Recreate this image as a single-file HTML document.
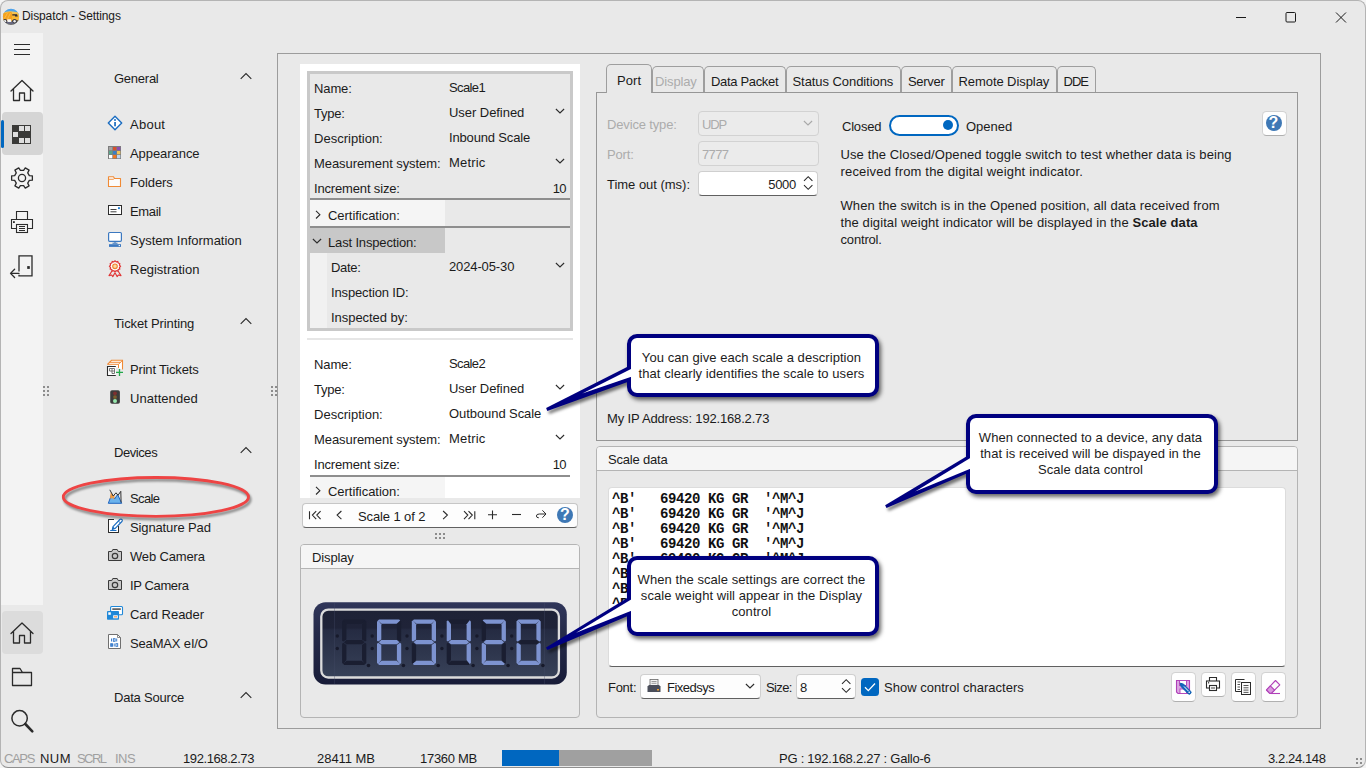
<!DOCTYPE html>
<html lang="en">
<head>
<meta charset="utf-8">
<title>Dispatch - Settings</title>
<style>
html,body{margin:0;padding:0}
body{width:1366px;height:768px;overflow:hidden;background:#f4f4f4;font-family:"Liberation Sans",sans-serif;font-size:13px;color:#1b1b1b;position:relative}
.a{position:absolute;box-sizing:border-box}
.t{position:absolute;white-space:nowrap;line-height:16px;height:16px;margin-top:1px}
.dis{color:#a3a3a3}
svg{position:absolute;overflow:visible}
.grp{position:absolute;box-sizing:border-box;border:1px solid #b4b4b4;border-radius:4px;background:#e9e9e9}
.grph{position:absolute;box-sizing:border-box;left:0;top:0;right:0;height:24px;background:#f5f5f5;border-bottom:1px solid #b4b4b4;border-radius:3px 3px 0 0}
.tab{position:absolute;box-sizing:border-box;top:65px;height:28px;border:1px solid #9e9e9e;border-bottom:none;border-radius:5px 5px 0 0;background:#e9e9e9}
.btn{position:absolute;box-sizing:border-box;width:25px;height:25px;background:#fefefe;border:1px solid #d2d2d2;border-bottom-color:#b0b0b0;border-radius:4.500px}
.inp{position:absolute;box-sizing:border-box;background:#fff;border:1px solid #cfcfcf;border-bottom-color:#606060;border-radius:4px}
.inpd{position:absolute;box-sizing:border-box;background:#ebebeb;border:1px solid #d2d2d2;border-radius:4px}
.call{position:absolute;box-sizing:border-box;background:#fff;border:4px solid #000080;border-radius:10px;box-shadow:2px 3px 4px rgba(0,0,0,.6);text-align:center;font-size:13px;line-height:16px;color:#1c1c1c;padding-right:3px;letter-spacing:0.06px}
</style>
</head>
<body>
<!-- window chrome -->
<div class="a" id="win" style="left:0;top:0;width:1366px;height:768px;background:#e9e9e9;border:1px solid #b4b4b4;border-bottom-color:#8f8f8f;border-radius:8px"></div>

<!-- TITLEBAR -->
<div id="titlebar">
<svg style="left:2px;top:8px" width="18" height="18" viewBox="2 8 18 18">
<defs><clipPath id="tc"><circle cx="11" cy="16.800" r="8.100"/></clipPath></defs>
<g clip-path="url(#tc)">
<rect x="2" y="8" width="18" height="18" fill="#4fa3ea"/>
<path d="M2 13 Q8 10.500 13 11.500 T20 12 V26 H2 Z" fill="#f2c45a"/>
<rect x="2" y="21.300" width="18" height="5" fill="#686a80"/>
<path d="M3 20.800 V13.200 L11.300 11.800 L12 13.500 V20.800 Z" fill="#f5a21e"/>
<path d="M4.500 18.500 L7.500 13 M7.500 19 L10.500 13" stroke="#f9bd4c" stroke-width="0.900"/>
<path d="M12 13.800 H17.300 L19.200 16.500 V20.800 H12 Z" fill="#f7b733"/>
<path d="M12.300 14.300 H17 L17.800 16.400 H15 V15.600 H12.300 Z" fill="#2d2a33"/>
<rect x="7.300" y="19.300" width="3.800" height="2.700" fill="#f4f4f4"/>
<rect x="19" y="17.800" width="1" height="2" fill="#ff4f8a"/>
<rect x="12" y="20.300" width="7.500" height="1.200" fill="#3a3a44"/>
<circle cx="5" cy="21.200" r="2.200" fill="#3a3a44"/><circle cx="5" cy="21.200" r="1.200" fill="#f0f0f0"/>
<circle cx="14.600" cy="21.200" r="2.200" fill="#3a3a44"/><circle cx="14.600" cy="21.200" r="1.200" fill="#f0f0f0"/>
</g>
</svg>
<div class="t" style="left:22px;top:7px;font-size:12px;color:#1a1a1a;letter-spacing:-0.101px">Dispatch - Settings</div>
<svg style="left:1231px;top:7px" width="120" height="20" viewBox="0 0 120 20" fill="none" stroke="#1a1a1a" stroke-width="1">
<path d="M5 10.5 H15"/>
<rect x="55" y="5.5" width="9.5" height="9.5" rx="1"/>
<path d="M105 5.5 L115 15.5 M115 5.5 L105 15.5"/>
</svg>
</div>
<!-- NAVSTRIP -->
<div id="navstrip">
<div class="a" style="left:1px;top:33px;width:42px;height:572px;background:#f3f3f3"></div>
<div class="a" style="left:2px;top:112px;width:41px;height:43px;background:#d5d5d5;border-radius:4px"></div>
<div class="a" style="left:1px;top:120px;width:3px;height:28px;background:#0067c0;border-radius:2px"></div>
<div class="a" style="left:2px;top:611px;width:41px;height:43px;background:#dcdcdc;border-radius:4px"></div>
<svg style="left:2px;top:33px" width="41" height="715" viewBox="2 33 41 715" fill="none" stroke="#2b2b2b" stroke-width="1.3" stroke-linejoin="round" stroke-linecap="round">
<!-- hamburger -->
<path d="M14 44.5 H30 M14 49.5 H30 M14 54.5 H30" stroke-width="1" stroke-linecap="butt"/>
<!-- home -->
<path id="home" d="M11 91 L22 80.5 L33 91 M13.5 89 V100.5 H19.5 V93 H24.5 V100.5 H30.5 V89"/>
<!-- checker -->
<rect x="12" y="125" width="19" height="19" fill="#3a3a38" stroke="none"/>
<g fill="#dedede" stroke="none"><rect x="19" y="126" width="5" height="5"/><rect x="25" y="126" width="5" height="5"/><rect x="13" y="132" width="5" height="5"/><rect x="19" y="138" width="5" height="5"/><rect x="25" y="138" width="5" height="5"/></g>
<!-- gear -->
<g id="gear"><path d="M29.32 175.62 L32.37 175.80 L32.37 180.20 L29.32 180.38 L27.72 183.15 L29.09 185.88 L25.28 188.08 L23.60 185.53 L20.40 185.53 L18.72 188.08 L14.91 185.88 L16.28 183.15 L14.68 180.38 L11.63 180.20 L11.63 175.80 L14.68 175.62 L16.28 172.85 L14.91 170.12 L18.72 167.92 L20.40 170.47 L23.60 170.47 L25.28 167.92 L29.09 170.12 L27.72 172.85 Z" stroke-width="1.3"/><circle cx="22" cy="178" r="3.6" stroke-width="1.3"/></g>
<!-- printer -->
<g id="printer" stroke-width="1.1" stroke-linejoin="miter"><path d="M16.5 219.500 V211.500 H27.500 V219.500"/><path d="M16.500 228.500 H11.500 V219.500 H32.500 V228.500 H27.500"/><rect x="16.500" y="224.500" width="11" height="8"/><path d="M19 226.500 H25 M19 228.500 H25 M19 230.500 H25" stroke-width="1" stroke-linecap="butt" shape-rendering="crispEdges"/><rect x="13" y="221.200" width="1.800" height="1.800" fill="#2b2b2b" stroke="none"/></g>
<!-- exit -->
<g id="exit" stroke-width="1.3" stroke-linejoin="miter" stroke-linecap="butt"><path d="M19 271.600 V255.800 H32 V275.800 H19 V274.800"/><path d="M19 273.400 H10.800 M14.600 269.300 L10.500 273.400 L14.600 277.500" stroke-linecap="round" stroke-linejoin="round"/><rect x="27.200" y="266.100" width="2.600" height="2.800" fill="#2b2b2b" stroke="none"/></g>
<!-- home2 -->
<path transform="translate(0 542.5)" d="M11 91 L22 80.5 L33 91 M13.5 89 V100.5 H19.5 V93 H24.5 V100.5 H30.5 V89"/>
<!-- folder -->
<path d="M12.500 685.500 V668.500 H20 L22.500 672.500 H31.500 V685.500 Z M12.500 672.500 H22.500"/>
<!-- search -->
<circle cx="19.600" cy="718.300" r="7.700" stroke-width="1.500"/><path d="M25.300 724 L32.300 731.300" stroke-width="2.600"/>
</svg>
</div>
<!-- SIDEBAR -->
<div id="sidebar">
<div class="t" style="left:114px;top:70px;letter-spacing:-0.25px">General</div>
<svg style="left:240px;top:72px" width="12" height="8" viewBox="0 0 12 8" fill="none" stroke="#2b2b2b" stroke-width="1.1"><path d="M0.7 6.800 L6 1.500 L11.300 6.800"/></svg>
<div class="t" style="left:114px;top:315px;letter-spacing:-0.109px">Ticket Printing</div>
<svg style="left:240px;top:317px" width="12" height="8" viewBox="0 0 12 8" fill="none" stroke="#2b2b2b" stroke-width="1.1"><path d="M0.7 6.800 L6 1.500 L11.300 6.800"/></svg>
<div class="t" style="left:114px;top:444px;letter-spacing:-0.427px">Devices</div>
<svg style="left:240px;top:446px" width="12" height="8" viewBox="0 0 12 8" fill="none" stroke="#2b2b2b" stroke-width="1.1"><path d="M0.7 6.800 L6 1.500 L11.300 6.800"/></svg>
<div class="t" style="left:114px;top:689px;letter-spacing:-0.206px">Data Source</div>
<svg style="left:240px;top:691px" width="12" height="8" viewBox="0 0 12 8" fill="none" stroke="#2b2b2b" stroke-width="1.1"><path d="M0.7 6.800 L6 1.500 L11.300 6.800"/></svg>
<div class="t" style="left:130px;top:116px;letter-spacing:0.253px">About</div>
<div class="t" style="left:130px;top:145px;letter-spacing:-0.062px">Appearance</div>
<div class="t" style="left:130px;top:174px;letter-spacing:-0.087px">Folders</div>
<div class="t" style="left:130px;top:203px;letter-spacing:-0.353px">Email</div>
<div class="t" style="left:130px;top:232px;letter-spacing:-0.013px">System Information</div>
<div class="t" style="left:130px;top:261px;letter-spacing:0.01px">Registration</div>
<div class="t" style="left:130px;top:361px;letter-spacing:-0.177px">Print Tickets</div>
<div class="t" style="left:130px;top:390px;letter-spacing:0.052px">Unattended</div>
<div class="t" style="left:130px;top:490px;letter-spacing:-0.606px">Scale</div>
<div class="t" style="left:130px;top:519px;letter-spacing:-0.127px">Signature Pad</div>
<div class="t" style="left:130px;top:548px;letter-spacing:-0.161px">Web Camera</div>
<div class="t" style="left:130px;top:577px;letter-spacing:-0.378px">IP Camera</div>
<div class="t" style="left:130px;top:606px;letter-spacing:-0.04px">Card Reader</div>
<div class="t" style="left:130px;top:635px;letter-spacing:-0.158px">SeaMAX eI/O</div>
<svg style="left:100px;top:110px" width="30" height="550" viewBox="100 110 30 550" fill="none">
<g><path d="M115 116.300 L121.700 123 L115 129.700 L108.300 123 Z" fill="#fff" stroke="#1a6cc0" stroke-width="1.400" stroke-linejoin="round"/><rect x="114.200" y="122" width="1.700" height="4.300" fill="#1a6cc0"/><circle cx="115" cy="120.100" r="1" fill="#1a6cc0"/></g>
<g><rect x="108" y="146" width="13" height="13" fill="#7d7d7d"/><rect x="109" y="147" width="3.300" height="3.300" fill="#a5a5a5"/><rect x="113" y="147" width="3.300" height="3.300" fill="#d9502f"/><rect x="117" y="147" width="3.300" height="3.300" fill="#8b4fb0"/><rect x="109" y="151" width="3.300" height="3.300" fill="#5aa58a"/><rect x="113" y="151" width="3.300" height="3.300" fill="#3b7fc4"/><rect x="117" y="151" width="3.300" height="3.300" fill="#f0c458"/><rect x="109" y="155" width="3.300" height="3.300" fill="#ffffff"/><rect x="113" y="155" width="3.300" height="3.300" fill="#f07820"/><rect x="117" y="155" width="3.300" height="3.300" fill="#b8d4f0"/></g>
<path d="M108.500 186.500 V176.700 H113.500 L114.500 178.500 H120.500 V186.500 Z" fill="#fbfbfb" stroke="#f08a35" stroke-width="1.100" stroke-linejoin="round"/><path d="M108.500 179.300 H113.300 L114.500 178.500" stroke="#f08a35" stroke-width="0.900"/>
<g><rect x="108.500" y="205.500" width="13" height="9" fill="#fff" stroke="#2b2b2b" stroke-width="1"/><path d="M110.500 209.500 H116.500 M110.500 211.800 H116.500" stroke="#2b2b2b" stroke-width="0.900"/><rect x="118" y="207.200" width="1.900" height="1.900" fill="#1a7ad0"/></g>
<g><rect x="108.600" y="232.500" width="12.800" height="8.800" rx="1" fill="#fff" stroke="#3b78c0" stroke-width="1.200"/><path d="M115 241.500 V243 M112.500 243.300 H117.500" stroke="#3b78c0" stroke-width="1.100"/><rect x="109" y="244.200" width="12" height="2.700" fill="#3b78c0"/><rect x="118.700" y="245" width="1.200" height="1.100" fill="#fff"/></g>
<g><path d="M112.300 270.500 L109 275.600 L111.700 275 L112.800 276.600 L115 272.800 L117.200 276.600 L118.300 275 L121 275.600 L117.700 270.500" fill="none" stroke="#e03535" stroke-width="1.100" stroke-linejoin="round"/><path d="M120.50 266.30 L119.44 267.49 L119.76 269.05 L118.25 269.55 L117.75 271.06 L116.19 270.74 L115.00 271.80 L113.81 270.74 L112.25 271.06 L111.75 269.55 L110.24 269.05 L110.56 267.49 L109.50 266.30 L110.56 265.11 L110.24 263.55 L111.75 263.05 L112.25 261.54 L113.81 261.86 L115.00 260.80 L116.19 261.86 L117.75 261.54 L118.25 263.05 L119.76 263.55 L119.44 265.11 Z" fill="#fff" stroke="#e03535" stroke-width="1.200"/><circle cx="115" cy="266.300" r="2.300" fill="#fbd9a0" stroke="#f08030" stroke-width="1.100"/></g>
<g><path d="M107.500 364.300 L111.500 360.300 H122.500 V369.500" stroke="#f08a35" stroke-width="1.100" fill="#fff"/><path d="M109.500 362.300 H120.500 M107.500 364.300 H118.500 L122.500 360.300 M118.500 364.300 V368" stroke="#f08a35" stroke-width="1"/><path d="M115.800 366.500 H107.500 V375.500 H115.800" fill="#fff" stroke="#2b2b2b" stroke-width="1.100"/><path d="M109.500 368.500 H114.500 V373.500 H112 V371 H109.500 Z M112 368.500 V371 H114.500" stroke="#6a6a6a" stroke-width="0.900"/><path d="M116 372.400 H123 M119.500 369 V376" stroke="#22a84a" stroke-width="1.300"/></g>
<g><rect x="110.200" y="390.200" width="9.700" height="13.600" rx="1.800" fill="#3b3b3b"/><circle cx="115" cy="393.300" r="1.900" fill="#7d3030"/><circle cx="115" cy="397.100" r="1.900" fill="#7a5c2c"/><circle cx="115" cy="400.900" r="2" fill="#96e6ac"/></g>
<g><path d="M108.300 503.300 L111.800 494 L114.600 499 L117.600 494.500 L121.700 503.300 Z" fill="#6ab2ec" stroke="#1f64c0" stroke-width="1" stroke-linejoin="round"/><path d="M109.800 499.300 L110.800 492 L113.200 496.300 L114.800 494.300 L114 499.800 L112.600 497.300 L111.600 499.300 L110.900 497.600 Z" fill="#f59a3c"/><path d="M109.800 489.800 L113.200 496 L116 492.800 L118 495.300 L120.800 491.300 L121.100 502.500" stroke="#333" stroke-width="1" stroke-linejoin="round" fill="none"/></g>
<g><path d="M114 519.500 H108.500 V532.500 H118.500 V526" fill="#fff" stroke="#2b2b2b" stroke-width="1"/><rect x="108.900" y="519.900" width="9.200" height="12.200" fill="#fff"/><path d="M114 519.500 H108.500 V532.500 H118.500 V526.500" stroke="#2b2b2b" stroke-width="1"/><path d="M110.200 530.500 H116.500" stroke="#1a6cc0" stroke-width="1"/><path d="M112.300 529.600 L113 526.600 L119.900 519.500 A1.400 1.400 0 0 1 121.900 521.500 L115 528.600 Z" fill="#fff" stroke="#1a6cc0" stroke-width="1.100" stroke-linejoin="round"/><path d="M112.300 529.600 L113 526.600 L115 528.600 Z" fill="#1a6cc0"/><path d="M118.400 521 L120.400 523" stroke="#1a6cc0" stroke-width="0.900"/></g>
<g transform="translate(0 0)"><path d="M108.500 560.500 V551.500 H111.800 L112.800 549.500 H117.200 L118.200 551.500 H121.500 V560.500 Z" fill="#c9c9c9" stroke="#3a3a3a" stroke-width="1" stroke-linejoin="round"/><circle cx="115" cy="556" r="2.700" fill="#c9c9c9" stroke="#3a3a3a" stroke-width="1.200"/></g>
<g transform="translate(0 29)"><path d="M108.500 560.500 V551.500 H111.800 L112.800 549.500 H117.200 L118.200 551.500 H121.500 V560.500 Z" fill="#c9c9c9" stroke="#3a3a3a" stroke-width="1" stroke-linejoin="round"/><circle cx="115" cy="556" r="2.700" fill="#c9c9c9" stroke="#3a3a3a" stroke-width="1.200"/></g>
<g><rect x="110.600" y="606.500" width="11.900" height="8.200" rx="1" fill="#fff" stroke="#2088d8" stroke-width="1.100"/><rect x="112.300" y="608.300" width="8.500" height="1.600" fill="#555"/><rect x="107" y="611" width="12" height="8.700" rx="0.800" fill="#2088d8"/><rect x="108.300" y="612.300" width="2.500" height="2.500" fill="#fff"/><rect x="113.200" y="615.300" width="4.600" height="3" fill="#fff"/><rect x="114" y="616.300" width="3" height="1.100" fill="#f08a35"/></g>
<g><path d="M108.500 634.500 H117.500 L120.500 637.500 V648.500 H108.500 Z" fill="#fff" stroke="#707070" stroke-width="1" stroke-linejoin="round"/><path d="M117.500 634.500 V637.500 H120.500" stroke="#707070" stroke-width="0.800"/><g stroke="#2a72c8" stroke-width="0.900"><path d="M111.500 638.500 V641.500 M116.700 638.500 V641.500 M114.200 643.500 V646.500"/><rect x="113.300" y="638.700" width="1.800" height="2.600"/><rect x="110.700" y="643.700" width="1.800" height="2.600"/><rect x="115.900" y="643.700" width="1.800" height="2.600"/></g></g>
</svg>
<svg style="left:50px;top:465px" width="215" height="65" viewBox="50 465 215 65" fill="none"><defs><filter id="sh" x="-10%" y="-20%" width="120%" height="150%"><feGaussianBlur stdDeviation="1.3"/></filter></defs><ellipse cx="157.500" cy="499.500" rx="92.600" ry="19.400" stroke="rgba(0,0,0,.4)" stroke-width="3" filter="url(#sh)"/><ellipse cx="155.900" cy="496.900" rx="92.600" ry="19.400" stroke="#ee4444" stroke-width="2.800"/></svg>
<svg style="left:43px;top:386px" width="6" height="10" viewBox="0 0 6 10" fill="#8c8c8c"><rect x="0" y="0" width="2" height="2"/><rect x="4" y="0" width="2" height="2"/><rect x="0" y="4" width="2" height="2"/><rect x="4" y="4" width="2" height="2"/><rect x="0" y="8" width="2" height="2"/><rect x="4" y="8" width="2" height="2"/></svg>
<svg style="left:271px;top:386px" width="6" height="10" viewBox="0 0 6 10" fill="#8c8c8c"><rect x="0" y="0" width="2" height="2"/><rect x="4" y="0" width="2" height="2"/><rect x="0" y="4" width="2" height="2"/><rect x="4" y="4" width="2" height="2"/><rect x="0" y="8" width="2" height="2"/><rect x="4" y="8" width="2" height="2"/></svg>
</div>
<!-- CONTENT -->
<div id="content">
<div class="a" style="left:277px;top:53px;width:1044px;height:676px;border:1px solid #9c9c9c"></div>
<div class="a" style="left:300px;top:64px;width:280px;height:434px;background:#fff"></div>
<div class="a" style="left:307px;top:71px;width:266px;height:260px;background:#e9e9e9;border:3px solid #c9c9c9"></div>
<div class="a" style="left:310px;top:198px;width:260px;height:2px;background:#8e8e8e"></div>
<div class="a" style="left:310px;top:200px;width:135px;height:26px;background:#f5f5f5"></div>
<div class="a" style="left:310px;top:226px;width:260px;height:2px;background:#8e8e8e"></div>
<div class="a" style="left:310px;top:228px;width:135px;height:25px;background:#c8c8c8"></div>
<div class="a" style="left:310px;top:253px;width:17px;height:75px;background:#f1f1f1"></div>
<div class="a" style="left:307px;top:337.500px;width:266px;height:2px;background:#e6e6e6"></div>
<div class="a" style="left:310px;top:475px;width:260px;height:2px;background:#8e8e8e"></div>
<div class="a" style="left:310px;top:477px;width:135px;height:21px;background:#f5f5f5"></div>
<div class="t" style="left:314px;top:80px;letter-spacing:-0.109px">Name:</div>
<div class="t" style="left:449px;top:79px;letter-spacing:-0.625px">Scale1</div>
<div class="t" style="left:314px;top:105px;letter-spacing:-0.209px">Type:</div>
<div class="t" style="left:449px;top:104px;letter-spacing:-0.052px">User Defined</div>
<svg style="left:555px;top:108px" width="10" height="6" viewBox="0 0 10 6" fill="none" stroke="#2b2b2b" stroke-width="1.1"><path d="M0.9 1 L5 5 L9.100 1"/></svg>
<div class="t" style="left:314px;top:130px;letter-spacing:0.009px">Description:</div>
<div class="t" style="left:449px;top:129px;letter-spacing:-0.163px">Inbound Scale</div>
<div class="t" style="left:314px;top:155px;letter-spacing:-0.072px">Measurement system:</div>
<div class="t" style="left:449px;top:154px;letter-spacing:0.185px">Metric</div>
<svg style="left:555px;top:158px" width="10" height="6" viewBox="0 0 10 6" fill="none" stroke="#2b2b2b" stroke-width="1.1"><path d="M0.9 1 L5 5 L9.100 1"/></svg>
<div class="t" style="left:314px;top:180px;letter-spacing:-0.16px">Increment size:</div>
<div class="t" style="left:500px;width:66px;text-align:right;top:180px;letter-spacing:-0.609px">10</div>
<div class="t" style="left:314px;top:356px;letter-spacing:-0.109px">Name:</div>
<div class="t" style="left:449px;top:355px;letter-spacing:-0.625px">Scale2</div>
<div class="t" style="left:314px;top:381px;letter-spacing:-0.209px">Type:</div>
<div class="t" style="left:449px;top:380px;letter-spacing:-0.052px">User Defined</div>
<svg style="left:555px;top:384px" width="10" height="6" viewBox="0 0 10 6" fill="none" stroke="#2b2b2b" stroke-width="1.1"><path d="M0.9 1 L5 5 L9.100 1"/></svg>
<div class="t" style="left:314px;top:406px;letter-spacing:0.009px">Description:</div>
<div class="t" style="left:449px;top:405px;letter-spacing:-0.07px">Outbound Scale</div>
<div class="t" style="left:314px;top:431px;letter-spacing:-0.072px">Measurement system:</div>
<div class="t" style="left:449px;top:430px;letter-spacing:0.185px">Metric</div>
<svg style="left:555px;top:434px" width="10" height="6" viewBox="0 0 10 6" fill="none" stroke="#2b2b2b" stroke-width="1.1"><path d="M0.9 1 L5 5 L9.100 1"/></svg>
<div class="t" style="left:314px;top:456px;letter-spacing:-0.16px">Increment size:</div>
<div class="t" style="left:500px;width:66px;text-align:right;top:456px;letter-spacing:-0.609px">10</div>
<svg style="left:315px;top:210px" width="6" height="10" viewBox="0 0 6 10" fill="none" stroke="#2b2b2b" stroke-width="1.1"><path d="M1 0.9 L4.900 4.700 L1 8.500"/></svg>
<div class="t" style="left:328px;top:207px;letter-spacing:-0.036px">Certification:</div>
<svg style="left:312px;top:238px" width="10" height="6" viewBox="0 0 10 6" fill="none" stroke="#2b2b2b" stroke-width="1.1"><path d="M0.9 1 L5 5 L9.100 1"/></svg>
<div class="t" style="left:328px;top:234px;letter-spacing:-0.16px">Last Inspection:</div>
<div class="t" style="left:331px;top:259px;letter-spacing:-0.316px">Date:</div>
<div class="t" style="left:449px;top:258px;letter-spacing:-0.125px">2024-05-30</div>
<svg style="left:555px;top:262px" width="10" height="6" viewBox="0 0 10 6" fill="none" stroke="#2b2b2b" stroke-width="1.1"><path d="M0.9 1 L5 5 L9.100 1"/></svg>
<div class="t" style="left:331px;top:284px;letter-spacing:-0.143px">Inspection ID:</div>
<div class="t" style="left:331px;top:309px;letter-spacing:-0.044px">Inspected by:</div>
<svg style="left:315px;top:486px" width="6" height="10" viewBox="0 0 6 10" fill="none" stroke="#2b2b2b" stroke-width="1.1"><path d="M1 0.9 L4.900 4.700 L1 8.500"/></svg>
<div class="a" style="left:328px;top:483px;width:110px;height:15px;overflow:hidden"><div class="t" style="left:0;top:0;letter-spacing:-0.036px">Certification:</div></div>
<div class="a" style="left:302px;top:503px;width:276px;height:25px;background:#fdfdfd;border:1px solid #c6c6c6;border-bottom-color:#606060;border-radius:4px"></div>
<svg style="left:302px;top:503px" width="276" height="25" viewBox="302 503 276 25" fill="none" stroke="#2b2b2b" stroke-width="1.1">
<path d="M309.500 511.200 V519.200 M316.200 511.100 L312.400 515.100 L316.200 519.100 M320.600 511.100 L316.800 515.100 L320.600 519.100"/>
<path d="M341.400 511 L337.100 515.100 L341.400 519.200"/>
<path d="M443.100 511 L447.400 515.100 L443.100 519.200"/>
<path d="M464 511.100 L467.800 515.100 L464 519.100 M468.500 511.100 L472.300 515.100 L468.500 519.100 M474.800 511.200 V519.200"/>
<path d="M488 514.800 H497 M492.500 510.400 V519.200"/>
<path d="M512 514.500 H521"/>
<path d="M545.500 514 H539.300 Q536.400 514 536.400 516 Q536.400 517.800 538.800 517.800 M542.400 510.300 L546 514 L542.400 517.700" stroke-width="1"/>
<circle cx="565" cy="515" r="8" fill="#3e78b5" stroke="none"/>
</svg>
<div class="t" style="left:358px;top:507.70000000000005px;letter-spacing:-0.117px">Scale 1 of 2</div>
<div class="t" style="left:559.500px;top:506px;width:11px;text-align:center;color:#fff;font-weight:bold;font-size:16px">?</div>
<svg style="left:435px;top:533px" width="10" height="6" viewBox="0 0 10 6" fill="#8c8c8c"><rect x="0" y="0" width="2" height="2"/><rect x="4" y="0" width="2" height="2"/><rect x="8" y="0" width="2" height="2"/><rect x="0" y="4" width="2" height="2"/><rect x="4" y="4" width="2" height="2"/><rect x="8" y="4" width="2" height="2"/></svg>
<div class="grp" style="left:300px;top:544px;width:280px;height:174px"><div class="grph" style="height:24px"></div></div>
<div class="t" style="left:312px;top:549px;letter-spacing:-0.125px">Display</div>
<svg id="lcd" style="left:313px;top:602px" width="254" height="83" viewBox="313 602 254 83">
<defs><linearGradient id="lg1" x1="0" y1="0" x2="0" y2="1"><stop offset="0" stop-color="#30365a"/><stop offset="0.35" stop-color="#262b4a"/><stop offset="1" stop-color="#181c38"/></linearGradient>
<linearGradient id="lg2" x1="0" y1="0" x2="0" y2="1"><stop offset="0" stop-color="#1e2236"/><stop offset="0.27" stop-color="#1f2338"/><stop offset="0.3" stop-color="#252b42"/><stop offset="1" stop-color="#384259"/></linearGradient></defs>
<rect x="313.500" y="602.200" width="253.300" height="82.300" rx="12" fill="url(#lg1)"/>
<rect x="321.300" y="609.600" width="237.600" height="67.900" rx="7" fill="url(#lg2)" stroke="#dcdcdc" stroke-width="2.300"/>
<path d="M334.500 603 V684 M544.500 603 V684" stroke="#454b68" stroke-width="0.600" opacity="0.55"/>
<g fill="#1a1e31"><polygon points="344.2,619.4 364.2,619.4 365.4,620.6 361.7,623.7 346.7,623.7 343.1,620.6"/><polygon points="366.3,621.5 365.1,620.3 362.0,624.3 362.0,639.4 365.1,641.5 366.3,640.7"/><polygon points="366.3,662.9 365.1,664.1 362.0,660.1 362.0,645.0 365.1,642.8 366.3,643.7"/><polygon points="344.2,665.0 364.2,665.0 365.4,663.8 361.7,660.7 346.7,660.7 343.1,663.8"/><polygon points="342.1,662.9 343.3,664.1 346.4,660.1 346.4,645.0 343.3,642.8 342.1,643.7"/><polygon points="342.1,621.5 343.3,620.3 346.4,624.3 346.4,639.4 343.3,641.5 342.1,640.7"/><polygon points="343.9,642.2 346.4,640.0 362.0,640.0 364.5,642.2 362.0,644.3 346.4,644.3"/><polygon points="401.2,621.5 400.0,620.3 396.9,624.3 396.9,639.4 400.0,641.5 401.2,640.7"/><polygon points="411.8,662.9 413.0,664.1 416.1,660.1 416.1,645.0 413.0,642.8 411.8,643.7"/><polygon points="448.8,619.4 468.8,619.4 469.9,620.6 466.3,623.7 451.3,623.7 447.6,620.6"/><polygon points="448.8,665.0 468.8,665.0 469.9,663.8 466.3,660.7 451.3,660.7 447.6,663.8"/><polygon points="446.7,662.9 447.9,664.1 451.0,660.1 451.0,645.0 447.9,642.8 446.7,643.7"/><polygon points="505.9,662.9 504.7,664.1 501.6,660.1 501.6,645.0 504.7,642.8 505.9,643.7"/><polygon points="481.7,621.5 482.9,620.3 486.0,624.3 486.0,639.4 482.9,641.5 481.7,640.7"/><polygon points="518.4,642.2 520.8,640.0 536.4,640.0 538.9,642.2 536.4,644.3 520.8,644.3"/></g>
<g fill="#7d93d0"><polygon points="379.1,619.4 399.1,619.4 400.2,620.6 396.6,623.7 381.6,623.7 377.9,620.6"/><polygon points="401.2,662.9 400.0,664.1 396.9,660.1 396.9,645.0 400.0,642.8 401.2,643.7"/><polygon points="379.1,665.0 399.1,665.0 400.2,663.8 396.6,660.7 381.6,660.7 377.9,663.8"/><polygon points="377.0,662.9 378.2,664.1 381.3,660.1 381.3,645.0 378.2,642.8 377.0,643.7"/><polygon points="377.0,621.5 378.2,620.3 381.3,624.3 381.3,639.4 378.2,641.5 377.0,640.7"/><polygon points="378.8,642.2 381.3,640.0 396.9,640.0 399.4,642.2 396.9,644.3 381.3,644.3"/><polygon points="413.9,619.4 433.9,619.4 435.1,620.6 431.4,623.7 416.4,623.7 412.8,620.6"/><polygon points="436.0,621.5 434.8,620.3 431.7,624.3 431.7,639.4 434.8,641.5 436.0,640.7"/><polygon points="436.0,662.9 434.8,664.1 431.7,660.1 431.7,645.0 434.8,642.8 436.0,643.7"/><polygon points="413.9,665.0 433.9,665.0 435.1,663.8 431.4,660.7 416.4,660.7 412.8,663.8"/><polygon points="411.8,621.5 413.0,620.3 416.1,624.3 416.1,639.4 413.0,641.5 411.8,640.7"/><polygon points="413.6,642.2 416.1,640.0 431.7,640.0 434.2,642.2 431.7,644.3 416.1,644.3"/><polygon points="470.9,621.5 469.7,620.3 466.6,624.3 466.6,639.4 469.7,641.5 470.9,640.7"/><polygon points="470.9,662.9 469.7,664.1 466.6,660.1 466.6,645.0 469.7,642.8 470.9,643.7"/><polygon points="446.7,621.5 447.9,620.3 451.0,624.3 451.0,639.4 447.9,641.5 446.7,640.7"/><polygon points="448.5,642.2 451.0,640.0 466.6,640.0 469.1,642.2 466.6,644.3 451.0,644.3"/><polygon points="483.8,619.4 503.8,619.4 504.9,620.6 501.3,623.7 486.3,623.7 482.6,620.6"/><polygon points="505.9,621.5 504.7,620.3 501.6,624.3 501.6,639.4 504.7,641.5 505.9,640.7"/><polygon points="483.8,665.0 503.8,665.0 504.9,663.8 501.3,660.7 486.3,660.7 482.6,663.8"/><polygon points="481.7,662.9 482.9,664.1 486.0,660.1 486.0,645.0 482.9,642.8 481.7,643.7"/><polygon points="483.5,642.2 486.0,640.0 501.6,640.0 504.1,642.2 501.6,644.3 486.0,644.3"/><polygon points="518.6,619.4 538.6,619.4 539.8,620.6 536.1,623.7 521.1,623.7 517.4,620.6"/><polygon points="540.7,621.5 539.5,620.3 536.4,624.3 536.4,639.4 539.5,641.5 540.7,640.7"/><polygon points="540.7,662.9 539.5,664.1 536.4,660.1 536.4,645.0 539.5,642.8 540.7,643.7"/><polygon points="518.6,665.0 538.6,665.0 539.8,663.8 536.1,660.7 521.1,660.7 517.4,663.8"/><polygon points="516.5,662.9 517.7,664.1 520.8,660.1 520.8,645.0 517.7,642.8 516.5,643.7"/><polygon points="516.5,621.5 517.7,620.3 520.8,624.3 520.8,639.4 517.7,641.5 516.5,640.7"/></g>
<g fill="#171a2b"><circle cx="337.3" cy="636" r="1.700"/><circle cx="337.3" cy="648.500" r="1.700"/><circle cx="368.5" cy="665.500" r="1.800"/><circle cx="372.2" cy="636" r="1.700"/><circle cx="372.2" cy="648.500" r="1.700"/><circle cx="403.4" cy="665.500" r="1.800"/><circle cx="407.0" cy="636" r="1.700"/><circle cx="407.0" cy="648.500" r="1.700"/><circle cx="438.2" cy="665.500" r="1.800"/><circle cx="441.9" cy="636" r="1.700"/><circle cx="441.9" cy="648.500" r="1.700"/><circle cx="473.1" cy="665.500" r="1.800"/><circle cx="476.9" cy="636" r="1.700"/><circle cx="476.9" cy="648.500" r="1.700"/><circle cx="508.1" cy="665.500" r="1.800"/><circle cx="511.7" cy="636" r="1.700"/><circle cx="511.7" cy="648.500" r="1.700"/><circle cx="542.9" cy="665.500" r="1.800"/></g>
</svg>
<div class="tab" style="left:652px;width:52px;top:66px;height:27px"></div>
<div class="t" style="left:655px;top:73px;color:#acacac;letter-spacing:-0.125px">Display</div>
<div class="tab" style="left:704px;width:82px;top:66px;height:27px"></div>
<div class="t" style="left:711px;top:73px;letter-spacing:-0.325px">Data Packet</div>
<div class="tab" style="left:786px;width:115px;top:66px;height:27px"></div>
<div class="t" style="left:792.5px;top:73px;letter-spacing:-0.068px">Status Conditions</div>
<div class="tab" style="left:901px;width:51px;top:66px;height:27px"></div>
<div class="t" style="left:908px;top:73px;letter-spacing:-0.299px">Server</div>
<div class="tab" style="left:952px;width:105px;top:66px;height:27px"></div>
<div class="t" style="left:958.5px;top:73px;letter-spacing:-0.073px">Remote Display</div>
<div class="tab" style="left:1057px;width:39px;top:66px;height:27px"></div>
<div class="t" style="left:1063.5px;top:73px;letter-spacing:-0.984px">DDE</div>
<div class="a" style="left:596px;top:92px;width:702px;height:349px;border:1px solid #969696;background:#e9e9e9"></div>
<div class="tab" style="left:606px;width:46px;top:64px;height:29px;border-radius:5px 5px 0 0"></div>
<div class="t" style="left:617px;top:72px;letter-spacing:0.102px">Port</div>
<div class="t" style="left:607px;top:116px;color:#acacac;letter-spacing:-0.15px">Device type:</div>
<div class="inpd" style="left:698px;top:111px;width:121px;height:25px"></div>
<div class="t" style="left:702px;top:116px;color:#acacac;letter-spacing:-1.151px">UDP</div>
<svg style="left:803px;top:120px" width="10" height="6" viewBox="0 0 10 6" fill="none" stroke="#a8a8a8" stroke-width="1.1"><path d="M0.9 1 L5 5 L9.100 1"/></svg>
<div class="t" style="left:607px;top:146px;color:#acacac;letter-spacing:-0.144px">Port:</div>
<div class="inpd" style="left:698px;top:141px;width:121px;height:25px"></div>
<div class="t" style="left:702px;top:146px;color:#acacac;letter-spacing:-0.605px">7777</div>
<div class="t" style="left:607px;top:176px;letter-spacing:-0.022px">Time out (ms):</div>
<div class="inp" style="left:698px;top:171px;width:120px;height:25px"></div>
<div class="t" style="left:730px;width:66px;text-align:right;top:176px;letter-spacing:-0.293px">5000</div>
<svg style="left:803px;top:175px" width="10" height="16" viewBox="0 0 10 16" fill="none" stroke="#2b2b2b" stroke-width="1.1"><path d="M1 5.800 L5.200 1.700 L9.400 5.800 M1 10.200 L5.200 14.300 L9.400 10.200"/></svg>
<div class="t" style="left:842px;top:118px;letter-spacing:-0.203px">Closed</div>
<div class="a" style="left:889px;top:114.500px;width:70px;height:21.500px;border:2px solid #0067c0;border-radius:11px;background:#fff"></div>
<div class="a" style="left:942.600px;top:120px;width:10.400px;height:10.400px;border-radius:50%;background:#0067c0"></div>
<div class="t" style="left:966px;top:118px;letter-spacing:-0.003px">Opened</div>
<div class="btn" style="left:1262px;top:111px;width:25px;height:25px"></div>
<div class="a" style="left:1265.500px;top:114.500px;width:16px;height:16px;border-radius:50%;background:#3e78b5"></div>
<div class="t" style="left:1268px;top:113.500px;width:11px;text-align:center;color:#fff;font-weight:bold;font-size:16px">?</div>
<div class="t" style="left:840.5px;top:145.5px;letter-spacing:0.115px">Use the Closed/Opened toggle switch to test whether data is being</div>
<div class="t" style="left:840.5px;top:162.5px;letter-spacing:0.178px">received from the digital weight indicator.</div>
<div class="t" style="left:840.5px;top:196.5px;letter-spacing:0.085px">When the switch is in the Opened position, all data received from</div>
<div class="t" style="left:840.5px;top:213.5px;letter-spacing:0.093px">the digital weight indicator will be displayed in the <b>Scale data</b></div>
<div class="t" style="left:840.5px;top:230.5px;letter-spacing:-0.174px">control.</div>
<div class="t" style="left:607px;top:410px;letter-spacing:-0.165px">My IP Address: 192.168.2.73</div>
<div class="grp" style="left:596px;top:446px;width:702px;height:272px"><div class="grph" style="height:24px"></div></div>
<div class="t" style="left:608px;top:451px;letter-spacing:-0.194px">Scale data</div>
<div class="a" style="left:608px;top:487px;width:678px;height:180px;background:#fff;border:1px solid #dcdcdc;border-bottom-color:#606060;border-radius:4px"></div>
<div id="memo" class="a" style="left:612px;top:492px;width:300px;height:120px;overflow:hidden;font-family:'Liberation Mono',monospace;font-weight:bold;font-size:14px;letter-spacing:-0.4px;line-height:15px;color:#111;white-space:pre">^B'   69420 KG GR  '^M^J
^B'   69420 KG GR  '^M^J
^B'   69420 KG GR  '^M^J
^B'   69420 KG GR  '^M^J
^B'   69420 KG GR  '^M^J
^B'   69420 KG GR  '^M^J
^B'   69420 KG GR  '^M^J
^B'</div>
<div class="t" style="left:608px;top:678.5px;letter-spacing:-0.275px">Font:</div>
<div class="inp" style="left:640px;top:674px;width:121px;height:25px;background:#fdfdfd;border-bottom-color:#606060"></div>
<svg style="left:647px;top:679px" width="15" height="14" viewBox="0 0 15 14"><rect x="3" y="0.5" width="8" height="6" fill="#f4f4f4" stroke="#666" stroke-width="0.8"/><path d="M4.500 2.500 H9.500 M4.500 4.300 H9.500" stroke="#777" stroke-width="0.7"/><path d="M0.5 13 V7.500 L2 6 H12 L13.500 7.500 V13 Z" fill="#4a4e5a"/><rect x="10" y="10" width="2" height="1.500" fill="#f0a030"/></svg>
<div class="t" style="left:667px;top:678.5px;letter-spacing:-0.506px">Fixedsys</div>
<svg style="left:745px;top:683px" width="10" height="6" viewBox="0 0 10 6" fill="none" stroke="#2b2b2b" stroke-width="1.1"><path d="M0.9 1 L5 5 L9.100 1"/></svg>
<div class="t" style="left:766px;top:678.5px;letter-spacing:-0.631px">Size:</div>
<div class="inp" style="left:796px;top:674px;width:60px;height:25px;background:#fdfdfd;border-bottom-color:#606060"></div>
<div class="t" style="left:800px;top:678.5px;letter-spacing:-0.984px">8</div>
<svg style="left:841px;top:678px" width="10" height="16" viewBox="0 0 10 16" fill="none" stroke="#2b2b2b" stroke-width="1.1"><path d="M1 5.800 L5.200 1.700 L9.400 5.800 M1 10.200 L5.200 14.300 L9.400 10.200"/></svg>
<div class="a" style="left:861px;top:677.500px;width:18px;height:18px;background:#0067c0;border-radius:3.500px"></div>
<svg style="left:861px;top:677.500px" width="18" height="18" viewBox="0 0 18 18" fill="none" stroke="#fff" stroke-width="1.300"><path d="M4 9.300 L7.300 12.600 L14 5.500"/></svg>
<div class="t" style="left:884px;top:678.5px;letter-spacing:0.015px">Show control characters</div>
<div class="btn" style="left:1171px;top:672px;height:30px"></div>
<div class="btn" style="left:1201px;top:672px;height:25px"></div>
<div class="btn" style="left:1231px;top:672px;height:30px"></div>
<div class="btn" style="left:1261px;top:672px;height:30px"></div>
<svg id="btnicons" style="left:1171px;top:672px" width="116" height="30" viewBox="1171 672 116 30" fill="none"><path d="M1176.500 680.500 H1189.500 V693.500 H1178 L1176.500 692 Z" fill="#dca6e2" stroke="#b040b8" stroke-width="1.100"/><rect x="1179.500" y="680.500" width="7" height="5" fill="#fff" stroke="#b040b8" stroke-width="0.900"/><rect x="1180" y="689" width="6.500" height="4.500" fill="#fff" stroke="#b040b8" stroke-width="0.900"/><path d="M1180.200 683.200 L1183.700 684.200 L1190.600 691.300 A1.700 1.700 0 0 1 1188.200 693.700 L1181.200 686.700 Z" fill="#1467c0" stroke="#0a5cb0" stroke-width="1" stroke-linejoin="round"/><path d="M1184.300 686.800 L1188.300 690.900" stroke="#fff" stroke-width="1" stroke-linecap="round"/><circle cx="1189.200" cy="692.300" r="0.800" fill="#fff"/><g stroke="#2b2b2b" stroke-width="1.100"><path d="M1209.500 681 V677.500 H1216.500 V681"/><rect x="1206.500" y="681" width="13" height="7"/><rect x="1209.500" y="685.500" width="7" height="5" fill="#fbfbfb"/><path d="M1211 688 H1215" stroke-width="0.900"/><rect x="1208" y="682.200" width="1.200" height="1.200" fill="#2b2b2b" stroke="none"/></g><g stroke="#2b2b2b" stroke-width="1"><path d="M1244.500 679.500 H1235.500 V691.500 H1241"/><path d="M1237.500 682 H1240.500 M1237.500 684.500 H1240 M1237.500 687 H1240 M1237.500 689.500 H1240" stroke-width="0.800"/><rect x="1241.500" y="682.500" width="9" height="12" fill="#fbfbfb"/><path d="M1243.500 685.500 H1248.500 M1243.500 687.800 H1248.500 M1243.500 690.100 H1248.500 M1243.500 692.400 H1248.500" stroke-width="0.800"/></g><g stroke="#b040b8" stroke-width="1.100" stroke-linejoin="round"><path d="M1275.500 680.500 L1279.800 684.800 L1271.500 693.200 H1269.500 L1266.500 690 Z" fill="#fbfbfb"/><path d="M1270.300 685.800 L1274.600 690.100 L1271.500 693.200 H1269.500 L1266.500 690 Z" fill="#d89ade"/><path d="M1270 693.500 H1280"/></g></svg>
</div>
<!-- STATUSBAR -->
<div id="statusbar">
<div class="t" style="left:4px;top:750px;color:#a0a0a0;font-size:13px;letter-spacing:-1.352px">CAPS</div>
<div class="t" style="left:40px;top:750px;font-size:13px;letter-spacing:0.464px">NUM</div>
<div class="t" style="left:77px;top:750px;color:#a0a0a0;font-size:13px;letter-spacing:-1.547px">SCRL</div>
<div class="t" style="left:115px;top:750px;color:#a0a0a0;font-size:13px;letter-spacing:-0.557px">INS</div>
<div class="t" style="left:183px;top:750px;font-size:13px;letter-spacing:-0.409px">192.168.2.73</div>
<div class="t" style="left:317px;top:750px;font-size:13px;letter-spacing:-0.037px">28411 MB</div>
<div class="t" style="left:420px;top:750px;font-size:13px;letter-spacing:-0.283px">17360 MB</div>
<div class="a" style="left:502px;top:750px;width:150px;height:16px;background:#a0a0a0"></div>
<div class="a" style="left:502px;top:750px;width:57px;height:16px;background:#0067c0"></div>
<div class="t" style="left:779px;top:750px;font-size:13px;letter-spacing:-0.251px">PG : 192.168.2.27 : Gallo-6</div>
<div class="t" style="left:1268px;top:750px;font-size:13px;letter-spacing:-0.395px">3.2.24.148</div>
<svg style="left:1356px;top:758px" width="7" height="7" viewBox="0 0 7 7" fill="#8c8c8c"><rect x="0" y="0" width="2" height="2"/><rect x="4" y="0" width="2" height="2"/><rect x="0" y="4" width="2" height="2"/><rect x="4" y="4" width="2" height="2"/></svg>
</div>
<!-- CALLOUTS -->
<div id="callouts">
<svg style="left:0;top:0" width="1366" height="768" viewBox="0 0 1366 768"><defs><filter id="csh" x="-20%" y="-20%" width="140%" height="140%"><feGaussianBlur stdDeviation="1.5"/></filter></defs>
<polygon points="631,368.9 548.1,411.1 549.3,414 631,384.6" fill="rgba(0,0,0,.5)" filter="url(#csh)"/>
<polygon points="970.5,458.2 887.1,508.2 888.5,511.1 970.5,475.8" fill="rgba(0,0,0,.5)" filter="url(#csh)"/>
<polygon points="631,600.1 548,650.4 549.4,653 631,618.5" fill="rgba(0,0,0,.5)" filter="url(#csh)"/>
</svg>
<div class="call" style="left:627px;top:334px;width:252px;height:62.5px;padding-top:11.6px">You can give each scale a description<br>that clearly identifies the scale to users</div>
<div class="call" style="left:966px;top:414.3px;width:252px;height:79.8px;padding-top:11.3px">When connected to a device, any data<br>that is received will be dispayed in the<br>Scale data control</div>
<div class="call" style="left:627px;top:556.3px;width:252px;height:79.7px;padding-top:11.3px">When the scale settings are correct the<br>scale weight will appear in the Display<br>control</div>
<svg style="left:0;top:0" width="1366" height="768" viewBox="0 0 1366 768">
<polygon points="629,365.9 546.1,408.1 547.3,411 629,381.6" fill="#000080"/><polygon points="632,368.6 582.3,393.5 632,376.4" fill="#fff"/>
<polygon points="968.5,455.2 885.1,505.2 886.5,508.1 968.5,472.8" fill="#000080"/><polygon points="971.5,457.2 915.2,491.5 971.5,468.3" fill="#fff"/>
<polygon points="629,597.1 546,647.4 547.4,650 629,615.5" fill="#000080"/><polygon points="632,599 576.1,632.8 632,610.6" fill="#fff"/>
</svg>
</div>
</body>
</html>
